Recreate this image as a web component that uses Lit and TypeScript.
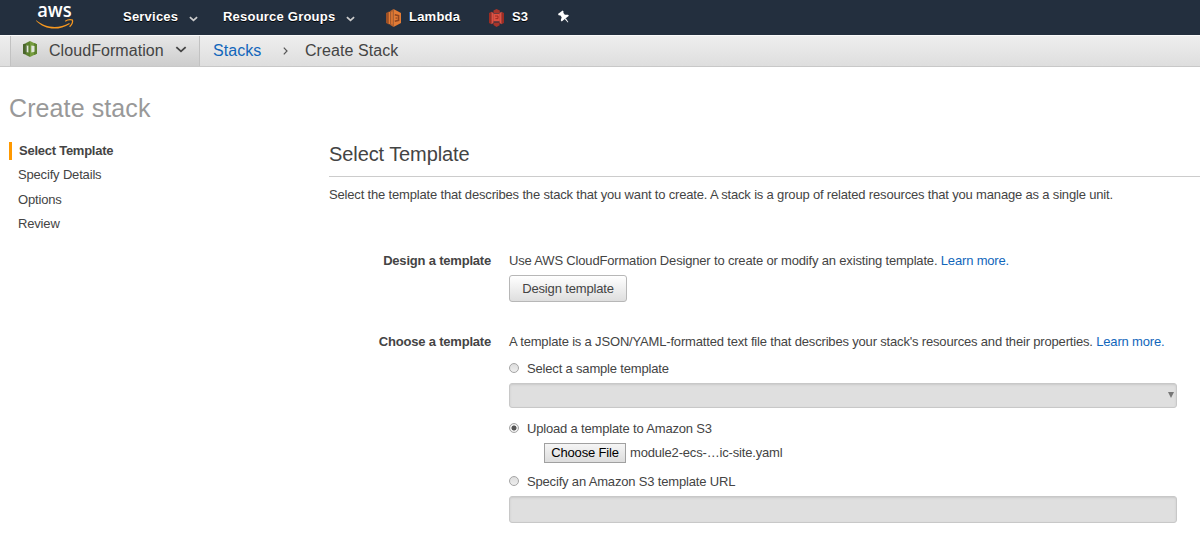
import { LitElement, html, css } from "lit";
import { customElement } from "lit/decorators.js";

const chevron = (cls: string) => html`<svg class=${cls} viewBox="0 0 10 6">
  <path d="M1 1 L5 4.6 L9 1" fill="none" stroke="currentColor" stroke-width="1.9" />
</svg>`;

const lambdaIcon = html`<svg class="service-icon" viewBox="0 0 15 18">
  <path d="M0 4 L3 2.6 V15.4 L0 14Z" fill="#9d5025" />
  <path d="M2.8 3 L4.2 2.4 V15.6 L2.8 15Z" fill="#e27b35" />
  <path d="M4.2 2 L7.5 0 V18 L4.2 16Z" fill="#b9622c" />
  <path d="M5.3 3 L6.6 2.4 V15.6 L5.3 15Z" fill="#e27b35" />
  <path d="M7.5 0 L15 4 V14 L7.5 18Z" fill="#e27b35" />
  <path d="M8.8 5.8 L12.6 6.7 V11.3 L8.8 12.2" fill="none" stroke="#8e4520" stroke-width="1.5" />
  <path d="M9.5 8.2h2v1.8h-2z" fill="#ad592a" />
</svg>`;

const s3Icon = html`<svg class="service-icon" viewBox="0 0 15 18">
  <path d="M0 4 L2.4 2.8 V15.2 L0 14Z" fill="#9c2c23" />
  <path d="M2.4 2.8 L4.5 4 V14 L2.4 15.2Z" fill="#df5142" />
  <path d="M12.6 2.8 L15 4 V14 L12.6 15.2Z" fill="#9c2c23" />
  <path d="M10.5 4 L12.6 2.8 V15.2 L10.5 14Z" fill="#df5142" />
  <path d="M4.5 1.5 L7.5 0 L10.8 1.5 V4 H4.5Z" fill="#a8352b" />
  <path d="M4.3 4.6 H10.8 V12.4 H4.3Z" fill="#df5142" />
  <path d="M6 7 H9 V9.6 H6.4" fill="none" stroke="#98291f" stroke-width=".9" />
  <path d="M4.5 13.4 H10.6 V16.3 L7.5 18 L4.5 16Z" fill="#a8352b" />
</svg>`;

const pinIcon = html`<svg class="pin" viewBox="0 0 12 12">
  <g fill="#fff" transform="rotate(-38 6 6)">
    <path d="M3 0 H9 V1.6 L8 2.3 V4.8 L10.6 6.6 V8.1 H1.4 V6.6 L4 4.8 V2.3 L3 1.6Z" />
    <path d="M5.3 8 H6.7 L6.3 12.6 H5.7Z" />
  </g>
</svg>`;

const cloudFormationIcon = html`<svg class="cf-icon" viewBox="0 0 14 16">
  <path d="M0 3.3 L3 2.2 V13.8 L0 12.7Z" fill="#4a662b" />
  <path d="M3 2 L7 0 V16 L3 14Z" fill="#5d8230" />
  <path d="M7 0 L11 2 L14 3.3 V12.7 L11 14 L7 16Z" fill="#759c3e" />
  <path d="M11 2 L14 3.3 V12.7 L11 14Z" fill="#5d8230" />
  <path d="M2.2 5 L5.4 4.4 V11.4 L2.2 10.8Z M8.3 4.4 L11.5 5 V10.8 L8.3 11.4Z" fill="#e2e7dc" />
  <path d="M2.2 5 H3.6 V11 H2.2Z" fill="#3d5822" />
</svg>`;

const awsLogo = html`<svg class="aws" viewBox="0 -4 40 30">
  <text x="1.2" y="13" textLength="34.5" lengthAdjust="spacingAndGlyphs">aws</text>
  <path d="M0.3 16.3 C9 23.6 22 25.6 33.3 18.9 L33.8 19.9 C22 27.6 8 25.4 0 16.8Z" fill="#f7981f" />
  <path d="M29.2 17.2 C31.6 15.6 34.6 15.4 36.4 16 C36.9 17.8 35.6 20.9 33.6 22.8" fill="none" stroke="#f7981f" stroke-width="1.3" />
</svg>`;

@customElement("app-root")
export class AppRoot extends LitElement {
  static styles = css`
    :host {
      display: block;
      height: 554px;
      overflow: hidden;
      background: #fff;
      color: #444;
      font: 13px/16px "Liberation Sans", Arial, sans-serif;
    }
    * { box-sizing: border-box; }
    svg { display: block; flex: none; }
    a { color: #1166bb; text-decoration: none; }
    .top {
      display: flex;
      height: 35px;
      background: #232f3e;
      color: #fff;
      font-weight: bold;
      line-height: 33px;
      letter-spacing: 0.22px;
      padding-left: 36px;
      text-shadow: 0 1px 0 #000;
      white-space: nowrap;
    }
    .aws { width: 40px; height: 30px; overflow: visible; }
    .aws text {
      font: 600 20px/1 "Open Sans", sans-serif;
      letter-spacing: 0;
      fill: #fff;
      text-shadow: none;
    }
    .menu { display: flex; }
    .services { width: 100px; margin-left: 47px; }
    .groups { width: 163px; }
    .top-chevron { width: 9px; height: 6px; margin: 16px 0 0 10.5px; color: #ccc; }
    .shortcut { display: flex; line-height: 34px; }
    .service-icon { width: 15px; height: 18px; margin-top: 9px; }
    .lambda { width: 103px; }
    .shortcut span { margin-left: 8px; }
    .s3 { width: 69px; letter-spacing: 0; }
    .pin { width: 12px; height: 12px; margin-top: 11px; overflow: visible; }
    .crumbs {
      display: flex;
      height: 32px;
      padding-left: 10px;
      border-top: 1px solid #fafafa;
      border-bottom: 1px solid #c8c8c8;
      background: linear-gradient(#eeeeee, #dedede);
      font-size: 16px;
      line-height: 29px;
      letter-spacing: 0.07px;
      white-space: nowrap;
    }
    .service {
      display: flex;
      width: 190px;
      height: 30px;
      padding-left: 12px;
      border-left: 1px solid #c2c2c2;
      border-right: 1px solid #c2c2c2;
      background: linear-gradient(#e7e7e7, #cdcdcd);
    }
    .cf-icon { width: 14px; height: 16px; margin: 5px 12px 0 0; }
    .service-name { width: 126px; }
    .crumb-chevron { width: 12px; height: 7px; margin-top: 10px; color: #444; }
    .crumb-chevron path { stroke-width: 1.6; }
    .stacks { width: 70px; margin-left: 13px; }
    .sep { width: 5px; height: 8px; margin: 11px 17px 0 0; }
    .body { display: flex; padding-left: 9px; }
    .side { width: 320px; padding-top: 26px; letter-spacing: -0.17px; }
    .side h1 {
      margin: 0 0 19px;
      font-size: 25px;
      line-height: 30px;
      font-weight: normal;
      letter-spacing: 0.1px;
      color: #999;
    }
    .step { height: 18px; line-height: 18px; margin-bottom: 6.4px; padding-left: 9px; }
    .step.current {
      border-left: 3px solid #f90;
      padding-left: 7px;
      font-weight: bold;
      letter-spacing: -0.25px;
    }
    .main { flex: 1; padding-top: 74px; white-space: nowrap; letter-spacing: -0.173px; }
    .main h2 {
      margin: 0 0 10px;
      height: 36px;
      border-bottom: 1px solid #ccc;
      font-size: 20px;
      line-height: 26px;
      font-weight: normal;
      letter-spacing: -0.09px;
    }
    .row { display: flex; }
    .label {
      width: 162px;
      margin-right: 18px;
      text-align: right;
      font-weight: bold;
      letter-spacing: -0.2px;
    }
    .field { width: 668px; }
    .intro { margin-bottom: 50px; }
    .design { margin-bottom: 32px; }
    .button {
      display: block;
      width: 118px;
      height: 27px;
      margin-top: 6px;
      padding: 0;
      border: 1px solid #b7b7b7;
      border-radius: 3px;
      background: linear-gradient(#fff, #dedede);
      color: #444;
      font: inherit;
      letter-spacing: -0.15px;
    }
    .radio { display: flex; height: 16px; }
    .dot {
      width: 10px;
      height: 10px;
      margin: 2px 8px 0 0;
      border: 1px solid #a5a5a5;
      border-radius: 50%;
      background: linear-gradient(#ddd, #eee);
    }
    .dot.on { background: radial-gradient(circle, #555 0 2.1px, #eee 2.9px); }
    .sample { margin: 11px 0 6px; }
    .box {
      display: flex;
      justify-content: flex-end;
      width: 668px;
      height: 25px;
      border: 1px solid #c8c8c8;
      border-radius: 3px;
      background: #dfdfdf;
      box-shadow: inset 0 1px 2px #c9c9c9;
    }
    .box.url { height: 27px; margin-top: 6px; }
    .arrow { width: 6px; height: 6px; margin: 8px 2px 0 0; }
    .upload { margin-top: 13px; }
    .file { display: flex; align-items: center; height: 20px; margin: 6px 0 11px 35px; }
    .choose {
      width: 82px;
      height: 20px;
      padding: 0;
      margin-right: 4px;
      border: 1px solid #a0a0a0;
      background: linear-gradient(#f5f5f5, #ddd);
      color: #000;
      font: inherit;
      letter-spacing: -0.17px;
    }
  `;

  render() {
    return html`
      <header class="top">
        ${awsLogo}
        <div class="menu services"><span>Services</span>${chevron("top-chevron")}</div>
        <div class="menu groups"><span>Resource Groups</span>${chevron("top-chevron")}</div>
        <div class="shortcut lambda">${lambdaIcon}<span>Lambda</span></div>
        <div class="shortcut s3">${s3Icon}<span>S3</span></div>
        ${pinIcon}
      </header>
      <nav class="crumbs">
        <div class="service">
          ${cloudFormationIcon}<span class="service-name">CloudFormation</span>${chevron("crumb-chevron")}
        </div>
        <a class="stacks">Stacks</a>
        <svg class="sep" viewBox="0 0 5 8"><path d="M.8 .7 L4 4 L.8 7.3" fill="none" stroke="#555" stroke-width="1.2" /></svg>
        <span>Create Stack</span>
      </nav>
      <div class="body">
        <aside class="side">
          <h1>Create stack</h1>
          <div class="step current">Select Template</div>
          <div class="step">Specify Details</div>
          <div class="step">Options</div>
          <div class="step">Review</div>
        </aside>
        <main class="main">
          <h2>Select Template</h2>
          <div class="intro">Select the template that describes the stack that you want to create. A stack is a group of related resources that you manage as a single unit.</div>
          <section class="row design">
            <div class="label">Design a template</div>
            <div class="field">
              <div>Use AWS CloudFormation Designer to create or modify an existing template. <a>Learn more.</a></div>
              <button class="button">Design template</button>
            </div>
          </section>
          <section class="row">
            <div class="label">Choose a template</div>
            <div class="field">
              <div>A template is a JSON/YAML-formatted text file that describes your stack's resources and their properties. <a>Learn more.</a></div>
              <div class="radio sample"><span class="dot"></span>Select a sample template</div>
              <div class="box"><svg class="arrow" viewBox="0 0 6 6"><path d="M0 0H6L3 6Z" fill="#777" /></svg></div>
              <div class="radio upload"><span class="dot on"></span>Upload a template to Amazon S3</div>
              <div class="file"><button class="choose">Choose File</button><span>module2-ecs-…ic-site.yaml</span></div>
              <div class="radio"><span class="dot"></span>Specify an Amazon S3 template URL</div>
              <div class="box url"></div>
            </div>
          </section>
        </main>
      </div>
    `;
  }
}
